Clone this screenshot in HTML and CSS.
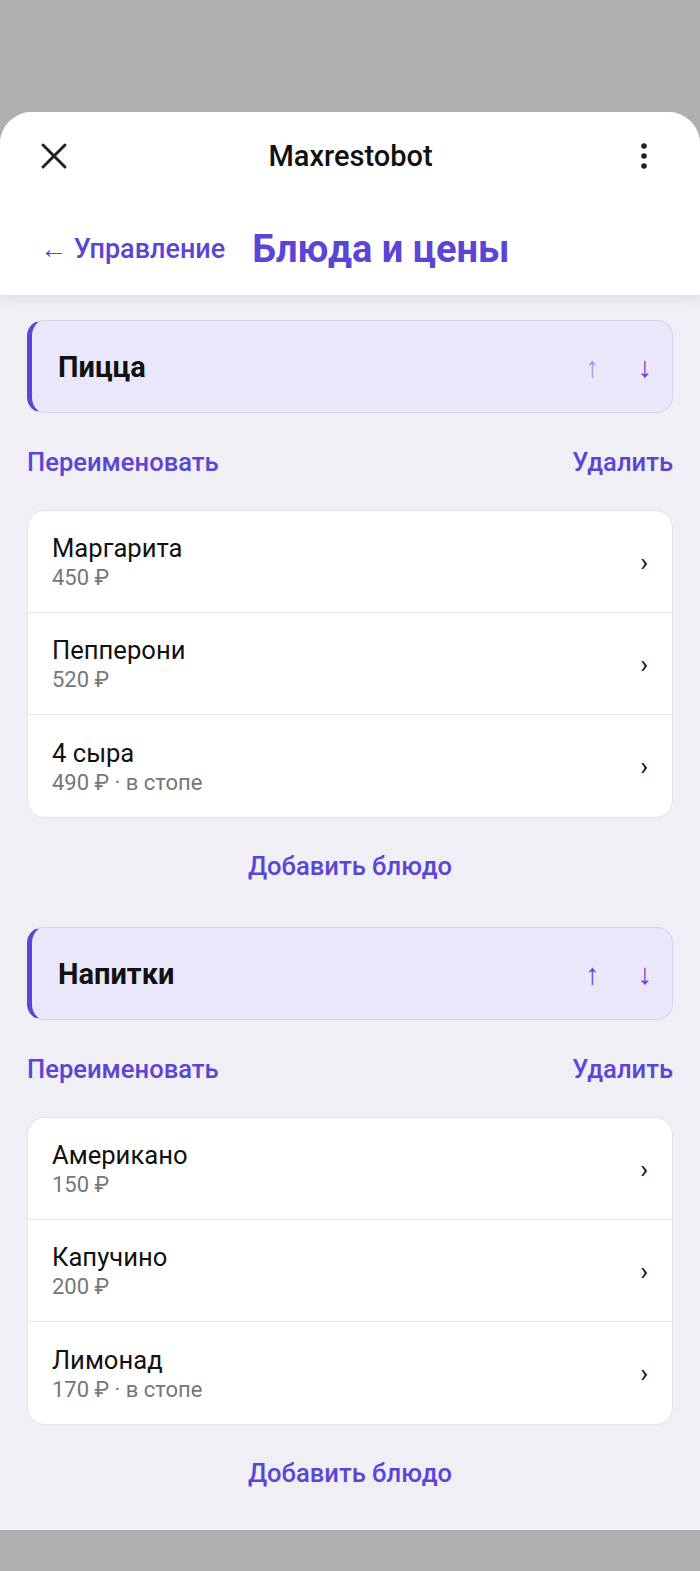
FILE: index.html
```html
<!DOCTYPE html>
<html lang="ru">
<head>
    <meta charset="UTF-8">
    <meta name="viewport" content="width=device-width, initial-scale=1.0">
    <title>Maxrestobot</title>
    <link rel="stylesheet" href="styles.css">
</head>
<body>
    <div class="sheet">
        <header class="header">
            <div class="topbar">
                <svg class="icon-close" width="28" height="28" viewBox="0 0 28 28">
                    <path d="M3 3 L25 25 M25 3 L3 25" stroke="#222" stroke-width="3" stroke-linecap="round"/>
                </svg>
                <div class="bot-name">Maxrestobot</div>
                <svg class="icon-more" width="8" height="28" viewBox="0 0 8 28">
                    <circle cx="4" cy="4" r="2.8" fill="#222"/>
                    <circle cx="4" cy="14" r="2.8" fill="#222"/>
                    <circle cx="4" cy="24" r="2.8" fill="#222"/>
                </svg>
            </div>
            <div class="nav">
                <a class="back">← Управление</a>
                <h1>Блюда и цены</h1>
            </div>
        </header>

        <main class="content">
            <section class="category">
                <div class="cat-head">
                    <span class="cat-name">Пицца</span>
                    <span class="arrows"><span class="arrow dim">↑</span><span class="arrow">↓</span></span>
                </div>
                <div class="actions">
                    <a>Переименовать</a>
                    <a>Удалить</a>
                </div>
                <ul class="dishes">
                    <li><div><div class="dish-name">Маргарита</div><div class="dish-price">450 ₽</div></div><span class="chev">›</span></li>
                    <li><div><div class="dish-name">Пепперони</div><div class="dish-price">520 ₽</div></div><span class="chev">›</span></li>
                    <li><div><div class="dish-name">4 сыра</div><div class="dish-price">490 ₽ · в стопе</div></div><span class="chev">›</span></li>
                </ul>
                <a class="add">Добавить блюдо</a>
            </section>

            <section class="category">
                <div class="cat-head">
                    <span class="cat-name">Напитки</span>
                    <span class="arrows"><span class="arrow">↑</span><span class="arrow">↓</span></span>
                </div>
                <div class="actions">
                    <a>Переименовать</a>
                    <a>Удалить</a>
                </div>
                <ul class="dishes">
                    <li><div><div class="dish-name">Американо</div><div class="dish-price">150 ₽</div></div><span class="chev">›</span></li>
                    <li><div><div class="dish-name">Капучино</div><div class="dish-price">200 ₽</div></div><span class="chev">›</span></li>
                    <li><div><div class="dish-name">Лимонад</div><div class="dish-price">170 ₽ · в стопе</div></div><span class="chev">›</span></li>
                </ul>
                <a class="add">Добавить блюдо</a>
            </section>
        </main>
    </div>
</body>
</html>
```

FILE: styles.css
```css
body {
    margin: 0;
    background-color: #b0b0b0;
    font-family: Roboto, "Noto Sans", sans-serif;
    color: #111;
}

.sheet {
    margin-top: 112px;
    background-color: #f0eff5;
    border-radius: 32px 32px 0 0;
    overflow: hidden;
    height: 1418px;
}

.header {
    background-color: #fff;
    height: 183px;
    box-shadow: 0 4px 12px rgba(0, 0, 0, 0.08);
    position: relative;
}

.topbar {
    display: grid;
    grid-template-columns: 1fr auto 1fr;
    align-items: center;
    height: 88px;
    padding: 0 52px 0 40px;
}

.icon-close {
    display: block;
}

.icon-more {
    display: block;
    justify-self: end;
}

.bot-name {
    font-size: 29px;
    font-weight: 500;
    color: #111;
    margin-left: 13px;
}

.nav {
    display: flex;
    align-items: center;
    gap: 27px;
    padding: 0 40px;
    height: 94px;
    margin-top: 2px;
}

.back {
    color: #5a45d4;
    font-size: 27px;
    font-weight: 500;
}

h1 {
    margin: 0;
    font-size: 38px;
    font-weight: 700;
    color: #5a45d4;
}

.content {
    padding: 25px 27px 0;
}

.cat-head {
    display: flex;
    align-items: center;
    justify-content: space-between;
    height: 91px;
    background-color: #eae7fa;
    border: 1px solid #d8d4ec;
    border-left: 5px solid #5a45d4;
    border-radius: 16px;
    padding: 0 20px 0 26px;
}

.cat-name {
    font-size: 29px;
    font-weight: 700;
}

.arrows {
    display: flex;
    gap: 38px;
}

.arrow {
    font-size: 29px;
    color: #5a45d4;
}

.arrow.dim {
    color: #a397e6;
}

.actions {
    display: flex;
    justify-content: space-between;
    height: 97px;
    align-items: center;
    font-size: 25.6px;
    font-weight: 500;
    color: #5a45d4;
}

.dishes {
    list-style: none;
    margin: 0;
    padding: 0;
    background-color: #fff;
    border: 1px solid #e4e3ea;
    border-radius: 18px;
}

.dishes li {
    display: flex;
    align-items: center;
    justify-content: space-between;
    height: 102px;
    padding: 0 24px;
    border-bottom: 1px solid #e4e3ea;
    box-sizing: border-box;
}

.dishes li:last-child {
    border-bottom: none;
}

.dish-name {
    font-size: 25.6px;
    color: #111;
}

.dish-price {
    font-size: 22px;
    color: #777;
    margin-top: 2px;
}

.chev {
    font-size: 26px;
    color: #111;
}

.add {
    display: block;
    text-align: center;
    font-size: 25.6px;
    font-weight: 500;
    color: #5a45d4;
    padding: 33px 0 46px;
}
```
